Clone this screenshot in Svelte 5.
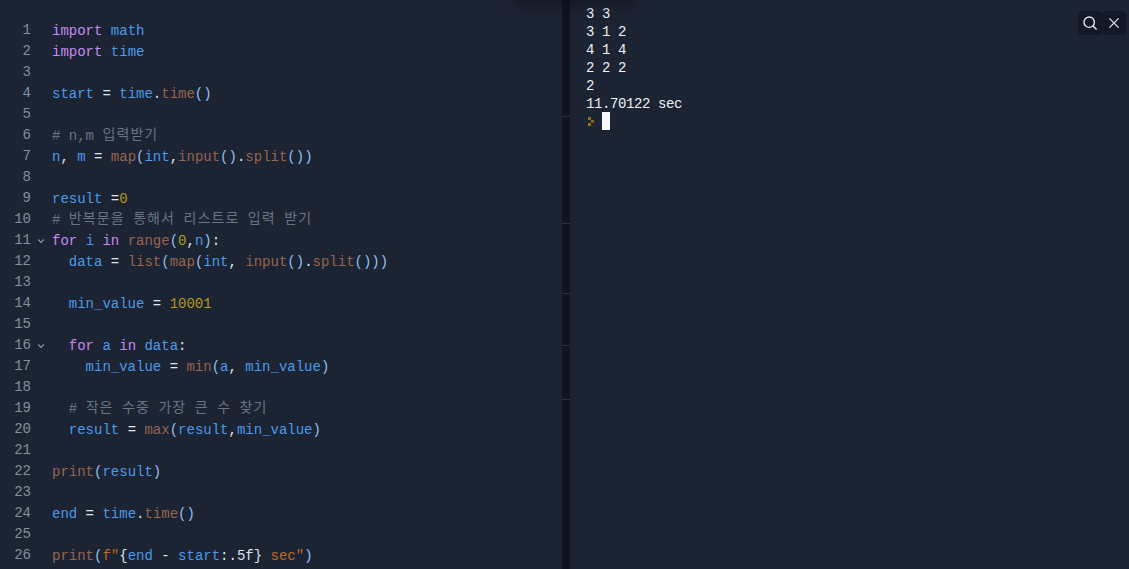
<script>
  // tiny token format: [class, text]; plain strings get the default colour
  const K = "kw", V = "var", F = "fn", N = "num", C = "cmt", P = "pun", S = "str";

  const code = [
    [[K, "import"], " ", [V, "math"]],
    [[K, "import"], " ", [V, "time"]],
    [],
    [[V, "start"], " = ", [V, "time"], ".", [F, "time"], [P, "()"]],
    [],
    [[C, "# n,m "], ["cmt ko", "입력받기"]],
    [[V, "n"], ", ", [V, "m"], " = ", [F, "map"], [P, "("], [V, "int"], ",", [F, "input"], [P, "()"], ".", [F, "split"], [P, "())"]],
    [],
    [[V, "result"], " =", [N, "0"]],
    [[C, "# "], ["cmt ko", "반복문을"], [C, " "], ["cmt ko", "통해서"], [C, " "], ["cmt ko", "리스트로"], [C, " "], ["cmt ko", "입력"], [C, " "], ["cmt ko", "받기"]],
    [[K, "for"], " ", [V, "i"], " ", [K, "in"], " ", [F, "range"], [P, "("], [N, "0"], ",", [V, "n"], [P, ")"], ":"],
    ["  ", [V, "data"], " = ", [F, "list"], [P, "("], [F, "map"], [P, "("], [V, "int"], ", ", [F, "input"], [P, "()"], ".", [F, "split"], [P, "()))"]],
    [],
    ["  ", [V, "min_value"], " = ", [N, "10001"]],
    [],
    ["  ", [K, "for"], " ", [V, "a"], " ", [K, "in"], " ", [V, "data"], ":"],
    ["    ", [V, "min_value"], " = ", [F, "min"], [P, "("], [V, "a"], ", ", [V, "min_value"], [P, ")"]],
    [],
    ["  ", [C, "# "], ["cmt ko", "작은"], [C, " "], ["cmt ko", "수중"], [C, " "], ["cmt ko", "가장"], [C, " "], ["cmt ko", "큰"], [C, " "], ["cmt ko", "수"], [C, " "], ["cmt ko", "찾기"]],
    ["  ", [V, "result"], " = ", [F, "max"], [P, "("], [V, "result"], ",", [V, "min_value"], [P, ")"]],
    [],
    [[F, "print"], [P, "("], [V, "result"], [P, ")"]],
    [],
    [[V, "end"], " = ", [V, "time"], ".", [F, "time"], [P, "()"]],
    [],
    [[F, "print"], [P, "("], [S, 'f"'], "{", [V, "end"], " - ", [V, "start"], ":.5f}", [S, ' sec"'], [P, ")"]]
  ];

  const foldable = [11, 16];
  const output = ["3 3", "3 1 2", "4 1 4", "2 2 2", "2", "11.70122 sec"];
  // heights of the splitter segments, each one ends in a little tick
  const segments = [117, 107, 70, 52, 54];
</script>

<div class="page">
  <section class="editor">
    <div class="lines">
      {#each code as line, i}
        <div class="row">
          <span class="ln">{i + 1}</span>
          <span class="fold">
            {#if foldable.includes(i + 1)}
              <svg width="8" height="6" viewBox="0 0 8 6"><path d="M1.2 1.5 4 4.3 6.8 1.5" fill="none" stroke="#8a96a8" stroke-width="1.2" /></svg>
            {/if}
          </span>
          <span class="src">{#each line as tok}{#if typeof tok === "string"}{tok}{:else}<span class={tok[0]}>{tok[1]}</span>{/if}{/each}</span>
        </div>
      {/each}
    </div>
  </section>

  <div class="splitter">
    {#each segments as h}
      <div class="seg" style="height: {h}px"></div>
    {/each}
  </div>

  <section class="console">
    {#each output as l}
      <div class="out">{l}</div>
    {/each}
    <div class="out prompt">
      <svg class="chev" width="6" height="9" viewBox="0 0 6 9">
        <rect x="0" y="0" width="3" height="3" fill="#8a7408" />
        <rect x="3" y="3" width="3" height="2.5" fill="#8a7408" />
        <rect x="0" y="6" width="3" height="3" fill="#8a7408" />
      </svg>
      <span class="cursor"></span>
    </div>

    <div class="tools">
      <button aria-label="Search">
        <svg width="16" height="16" viewBox="0 0 16 16"><circle cx="7.2" cy="7.2" r="5.2" fill="none" stroke="#e4e7ec" stroke-width="1.4" /><path d="M11 11l3.6 3.6" stroke="#e4e7ec" stroke-width="1.4" /></svg>
      </button>
      <button aria-label="Close">
        <svg width="16" height="16" viewBox="0 0 16 16"><path d="M3.4 3.4l9.2 9.2M12.6 3.4l-9.2 9.2" stroke="#e4e7ec" stroke-width="1.3" /></svg>
      </button>
    </div>
  </section>
  <div class="smudge"></div>
</div>

<style>
  :global(body) {
    margin: 0;
    background: #1c2333;
    overflow: hidden;
  }
  .page {
    position: relative;
    display: flex;
    width: 1129px;
    height: 569px;
    overflow: hidden;
    background: #1c2333;
    font-family: "Liberation Mono", "Noto Sans CJK KR", monospace;
    font-size: 14px;
  }
  .editor {
    width: 562px;
    flex: none;
    padding-top: 20px;
    box-sizing: border-box;
    overflow: hidden;
  }
  .row {
    display: flex;
    height: 21px;
    line-height: 21px;
    white-space: pre;
    color: #dfe3ea;
  }
  .ln {
    width: 31px;
    flex: none;
    text-align: right;
    color: #828f9f;
  }
  .fold {
    width: 21px;
    flex: none;
    display: flex;
    align-items: center;
    padding-left: 6px;
    box-sizing: border-box;
  }
  /* code sits a pixel lower than the gutter numbers */
  .src {
    line-height: 23px;
  }
  .kw { color: #c58af0; }
  .var { color: #4a9be8; }
  .fn { color: #96654f; }
  .num { color: #b39a14; }
  .cmt { color: #677486; }
  .pun { color: #8fc1ee; }
  .str { color: #c0691f; }
  .ko {
    font-family: "Noto Sans CJK KR", sans-serif;
    letter-spacing: 1.1px;
    line-height: 1;
    vertical-align: 1px;
  }

  .splitter {
    width: 8px;
    flex: none;
    background: #0e1320;
    display: flex;
    flex-direction: column;
  }
  .seg {
    box-sizing: border-box;
    border-bottom: 1px solid #2b3242;
    flex: none;
  }

  .console {
    position: relative;
    flex: 1;
    padding: 4px 0 0 16px;
    color: #eef0f4;
  }
  .out {
    height: 18px;
    line-height: 20px;
    letter-spacing: -0.4px;
    white-space: pre;
  }
  .prompt {
    display: flex;
    align-items: center;
  }
  .chev { margin-left: 2px; }
  .cursor {
    width: 8px;
    height: 18px;
    margin-left: 8px;
    background: #f5f7fb;
  }
  .tools {
    position: absolute;
    top: 11px;
    right: 3px;
    display: flex;
  }
  .tools button {
    width: 24px;
    height: 24px;
    padding: 0;
    border: 0;
    border-radius: 4px;
    background: #121827;
    display: flex;
    align-items: center;
    justify-content: center;
  }
  .smudge {
    position: absolute;
    top: -14px;
    left: 520px;
    width: 110px;
    height: 14px;
    box-shadow: 0 0 14px 4px rgba(8, 11, 20, 0.5);
  }
</style>
